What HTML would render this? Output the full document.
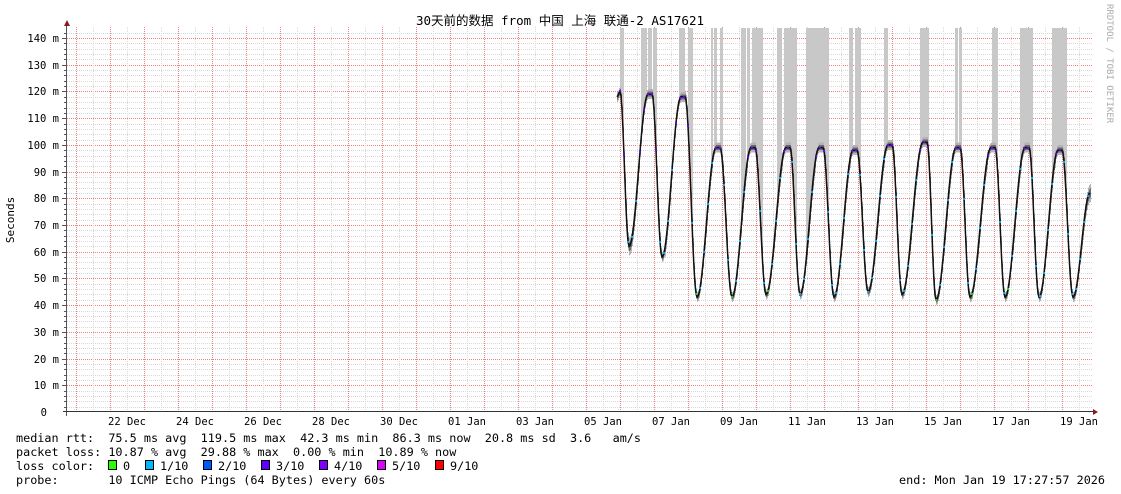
<!DOCTYPE html>
<html><head><meta charset="utf-8"><style>
html,body{margin:0;padding:0;background:#fff;width:1121px;height:494px;overflow:hidden}
svg{display:block}
text{font-family:"DejaVu Sans Mono","Liberation Mono","Noto Sans CJK SC",monospace;fill:#000}
</style></head><body>
<svg id="g" width="1121" height="494" xmlns="http://www.w3.org/2000/svg" shape-rendering="crispEdges">
<rect width="1121" height="494" fill="#fff"/>
<g id="grid"></g>
<g id="data"></g>
<line x1="66.5" y1="24" x2="66.5" y2="416" stroke="#555" stroke-width="1"/>
<line x1="63" y1="411.5" x2="1095" y2="411.5" stroke="#333" stroke-width="1"/>
<polygon points="64,26 70,26 67,20" fill="#8b1a1a" shape-rendering="auto"/>
<polygon points="1093,409 1093,415 1098,412" fill="#8b1a1a" shape-rendering="auto"/>
<text x="560" y="25" font-size="12.5" text-anchor="middle" font-family="'DejaVu Sans Mono','Noto Sans CJK SC',monospace">30天前的数据 from 中国 上海 联通-2 AS17621</text>
<text transform="translate(14,220) rotate(-90)" font-size="11" text-anchor="middle">Seconds</text>
<text transform="translate(1107,4) rotate(90)" font-size="9" style="fill:#aaa">RRDTOOL / TOBI OETIKER</text>
<g id="yl" font-size="10.5"></g>
<g id="xl" font-size="10.5"></g>
<g font-size="11.8">
<text x="16" y="442" xml:space="preserve">median rtt:  75.5 ms avg  119.5 ms max  42.3 ms min  86.3 ms now  20.8 ms sd  3.6   am/s</text>
<text x="16" y="456" xml:space="preserve">packet loss: 10.87 % avg  29.88 % max  0.00 % min  10.89 % now</text>
<text x="16" y="470" xml:space="preserve">loss color:  </text>
<text x="16" y="484" xml:space="preserve">probe:       10 ICMP Echo Pings (64 Bytes) every 60s</text>
<text x="1105" y="484" text-anchor="end">end: Mon Jan 19 17:27:57 2026</text>
</g>
<g id="lc" font-size="11.8"></g>
</svg>
<script>
var NS="http://www.w3.org/2000/svg";
function el(p,t,a,txt){var e=document.createElementNS(NS,t);for(var k in a)e.setAttribute(k,a[k]);if(txt!==undefined)e.textContent=txt;document.getElementById(p).appendChild(e);return e;}
var X0=67,X1=1093,Y0=412,S=2.671;
for(var v=2;v<=142;v+=2){var y=Math.round(Y0-v*S)+0.5;var maj=v%10==0;
el('grid','line',{x1:X0,x2:X1,y1:y,y2:y,stroke:maj?'#f08080':'#d8d8d8','stroke-dasharray':'1,1','stroke-width':1});
el('grid','line',{x1:maj?62:64,x2:67,y1:y,y2:y,stroke:'#555'});
if(maj)el('yl','text',{x:59,y:y+3.5,'text-anchor':'end'},v+' m');}
el('yl','text',{x:47,y:416,'text-anchor':'end'},'0');
for(var x=76;x<X1;x+=17){var mj=((x-76)/17)%2==0;
el('grid','line',{x1:x+0.5,x2:x+0.5,y1:27,y2:412,stroke:mj?'#f08080':'#d8d8d8','stroke-dasharray':'1,1'});}
var labs=['22 Dec','24 Dec','26 Dec','28 Dec','30 Dec','01 Jan','03 Jan','05 Jan','07 Jan','09 Jan','11 Jan','13 Jan','15 Jan','17 Jan','19 Jan'];
for(var i=0;i<labs.length;i++)el('xl','text',{x:127+68*i,y:425,'text-anchor':'middle'},labs[i]);
var bars=[[620,623],[641,646],[648,651],[653,656],[679,684],[688,692],[711,712],[714,716],[720,722],[741,745],[747,749],[752,762],[777,781],[784,796],[806,828],[849,852],[855,860],[884,887],[920,928],[955,957],[959,961],[992,997],[1020,1032],[1052,1066]];
var mins=[[629,62],[662,58],[697,43],[732,43],[766,44],[800,44],[834,43],[868,45],[902,44],[936,42],[970,43],[1005,43],[1039,43],[1073,43]];
var maxs=[[650,119],[683,118],[718,99],[753,99],[788,99],[821,99],[855,98],[890,100],[925,101],[958,99],[993,99],[1027,99],[1060,98]];
var kp=[[617,118],[620,120]];
for(var i=0;i<mins.length;i++){kp.push(mins[i]);if(maxs[i]){kp.push([maxs[i][0]-2,maxs[i][1]]);kp.push([maxs[i][0]+2,maxs[i][1]]);}}
kp.push([1090,82]);
function val(x){for(var i=0;i<kp.length-1;i++){if(x>=kp[i][0]&&x<=kp[i+1][0]){var t=(x-kp[i][0])/(kp[i+1][0]-kp[i][0]);var a=kp[i][1],b=kp[i+1][1];
return a+(b-a)*(1-Math.cos(t*Math.PI))/2;}}return kp[kp.length-1][1];}
var pts=[];
for(var x=617;x<=1090;x++){var v=val(x);var y=Y0-v*S;pts.push(x+','+y.toFixed(1));
var inb=false;for(var j=0;j<bars.length;j++)if(x>=bars[j][0]&&x<=bars[j][1])inb=true;
if(inb)el('data','rect',{x:x,y:28,width:1,height:Math.max(0,y-28),fill:'#c8c8c8'});
var sp=(v>60&&v<95)?9:5;
el('data','rect',{x:x,y:y-sp,width:1,height:sp*2,fill:'#b4b4b4'});
el('data','rect',{x:x,y:y-sp*0.5,width:1,height:sp,fill:'#6a6a6a'});}
el('data','polyline',{points:pts.join(' '),fill:'none',stroke:'#111','stroke-width':1.5,'shape-rendering':'auto'});
for(var x=620;x<=1090;x+=4){var v=val(x);var y=Math.round(Y0-v*S);el('data','rect',{x:x-1,y:y-1,width:2,height:2,fill:v>95?'#6a00ff':(v<47&&x%3==0?'#20d020':'#00a8ff')});}
var lc=[['#26ff00','0'],['#00b8ff','1/10'],['#0059ff','2/10'],['#5e00ff','3/10'],['#7e00ff','4/10'],['#dd00ff','5/10'],['#ff0000','9/10']];
var lx=[108,145,203,261,319,377,435];
for(var i=0;i<lc.length;i++){el('lc','rect',{x:lx[i]+0.5,y:460.5,width:8,height:9,fill:lc[i][0],stroke:'#000'});el('lc','text',{x:lx[i]+15,y:470},lc[i][1]);}
</script>
</body></html>
